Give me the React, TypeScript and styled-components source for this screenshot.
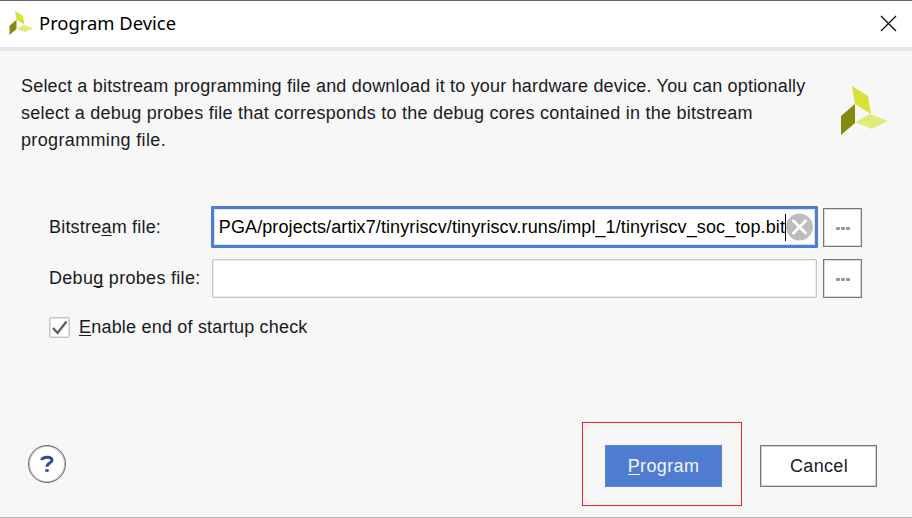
import React from "react";
import styled, { createGlobalStyle } from "styled-components";

const GlobalStyle = createGlobalStyle`
  * { box-sizing: border-box; }
  body { margin: 0; background: #f7f7f7; overflow: hidden; }
`;

const Dialog = styled.div`
  width: 912px;
  height: 518px;
  display: flex;
  flex-direction: column;
  background: #f7f7f7;
  border-top: 1px solid #666;
  border-bottom: 1px solid #b9b9b9;
  color: #1a1a1e;
  font: 18px/27px "Liberation Sans", Arial, sans-serif;
  white-space: nowrap;
`;

const TitleBar = styled.header`
  height: 50px;
  flex: none;
  display: flex;
  align-items: center;
  padding: 0 15px 2px 9px;
  background: #fff;
  border-bottom: 4px solid #e7e7e7;
`;

const Title = styled.h1`
  flex: 1;
  margin: 0 0 0 6px;
  color: #000;
  font: 400 18.4px/26px "Noto Sans", "Segoe UI", sans-serif;
`;

const CloseButton = styled.button`
  display: flex;
  padding: 0;
  border: 0;
  background: none;
`;

const Intro = styled.section`
  display: flex;
  justify-content: space-between;
  height: 118px;
  padding: 22px 24px 0 21px;
`;

const Description = styled.p`
  margin: 0;
`;

const Line = styled.span<{ $spacing: number }>`
  display: block;
  letter-spacing: ${(p) => p.$spacing}px;
`;

const BrandMark = styled.div`
  padding-top: 13px;
`;

const Form = styled.section`
  display: grid;
  grid-template-columns: 162px 607px 39px;
  grid-template-rows: 42px 42px;
  row-gap: 9px;
  align-items: center;
  margin: 37px 0 0 49px;
`;

const Label = styled.label<{ $spacing: number }>`
  letter-spacing: ${(p) => p.$spacing}px;
`;

const Mnemonic = styled.span`
  text-decoration: underline;
  text-decoration-thickness: 1px;
  text-underline-offset: 2px;
  text-decoration-skip-ink: none;
`;

const Field = styled.div<{ $focused?: boolean }>`
  display: flex;
  align-items: center;
  overflow: hidden;
  height: ${(p) => (p.$focused ? 42 : 39)}px;
  margin: ${(p) => (p.$focused ? "0" : "0 1px")};
  padding: 0 2px 0 4px;
  background: #fff;
  border: ${(p) => (p.$focused ? "3px solid #4f7dd2" : "1px solid #c4c4c4")};
  box-shadow: ${(p) => (p.$focused ? "inset 0 0 0 1px #d5e0f5" : "inset 0 0 0 1px #ececec, 0 0 0 1px #fbfbfb")};
  border-radius: 1px;
`;

const PathClip = styled.div`
  flex: 1;
  display: flex;
  justify-content: flex-end;
  overflow: hidden;
  color: #000;
  letter-spacing: 0.1px;
`;

const Caret = styled.span`
  width: 1px;
  height: 27px;
  flex: none;
  background: #000;
`;

const BrowseButton = styled.button`
  width: 39px;
  height: 39px;
  display: flex;
  align-items: center;
  justify-content: center;
  gap: 1px;
  margin-left: 5px;
  padding: 2px 0 0;
  background: #fff;
  border: 1px solid #777;
  box-shadow: inset 0 0 0 1px #d8d8d8;
`;

const Dot = styled.i`
  width: 4px;
  height: 3px;
  border-radius: 1px;
  background: #96968e;
`;

const CheckRow = styled.div`
  display: flex;
  align-items: center;
  gap: 9px;
  height: 27px;
  margin: 15px 0 0 49px;
`;

const CheckBox = styled.span`
  width: 21px;
  height: 21px;
  display: flex;
  background: #fff;
  border: 1px solid #c5c5c5;
  border-radius: 2px;
  box-shadow: inset 0 0 0 1px #e4e4e4;
`;

const Footer = styled.footer`
  display: flex;
  align-items: center;
  height: 84px;
  margin-top: auto;
  margin-bottom: 11px;
  padding: 0 35px 0 28px;
`;

const HelpButton = styled.button`
  width: 38px;
  height: 38px;
  margin-right: auto;
  padding: 0;
  background: #fff;
  border: 1px solid #666;
  box-shadow: inset 0 0 0 1px #c4c4c4;
  border-radius: 50%;
  display: flex;
  align-items: center;
  justify-content: center;
`;

const Highlight = styled.div`
  width: 160px;
  height: 84px;
  display: flex;
  align-items: center;
  justify-content: center;
  margin-right: 18px;
  padding: 4px 0 0 3px;
  border: 1px solid #ed1c24;
`;

const ActionButton = styled.button<{ $primary?: boolean }>`
  width: 117px;
  height: 42px;
  margin-top: ${(p) => (p.$primary ? 0 : 4)}px;
  padding: ${(p) => (p.$primary ? "0" : "0 0 0 1px")};
  font: inherit;
  letter-spacing: 0.35px;
  color: ${(p) => (p.$primary ? "#f1f5fc" : "#1a1a1e")};
  background: ${(p) => (p.$primary ? "#4f7cd1" : "#fff")};
  border: 1px solid ${(p) => (p.$primary ? "#5c86d5" : "#777")};
  box-shadow: ${(p) => (p.$primary ? "none" : "inset 0 0 0 1px #d0d0d0")};
`;

const Logo = ({ width, height }: { width: number; height: number }) => (
  <svg width={width} height={height} viewBox="0 0 48 49" preserveAspectRatio="none">
    <path d="M12 0 28 10 31 28 15 18Z" fill="#d7e13b" />
    <path d="M1 30 15 18V37L1 49Z" fill="#858b0c" />
    <path d="M15 36 30 28 48 35 32 43Z" fill="#e2ea7b" />
  </svg>
);

const Browse = () => (
  <BrowseButton aria-label="Browse">
    <Dot />
    <Dot />
    <Dot />
  </BrowseButton>
);

export default function App() {
  return (
    <Dialog role="dialog">
      <GlobalStyle />
      <TitleBar>
        <Logo width={24} height={24} />
        <Title>Program Device</Title>
        <CloseButton aria-label="Close">
          <svg width="17" height="17" viewBox="0 0 17 17" stroke="#000" strokeWidth="1.2">
            <path d="M1 1 16 16M16 1 1 16" />
          </svg>
        </CloseButton>
      </TitleBar>

      <Intro>
        <Description>
          <Line $spacing={0.19}>
            Select a bitstream programming file and download it to your hardware device. You can optionally
          </Line>
          <Line $spacing={0.25}>
            select a debug probes file that corresponds to the debug cores contained in the bitstream
          </Line>
          <Line $spacing={0.35}>programming file.</Line>
        </Description>
        <BrandMark>
          <Logo width={48} height={49} />
        </BrandMark>
      </Intro>

      <Form>
        <Label $spacing={0.2}>
          Bitstre<Mnemonic>a</Mnemonic>m file:
        </Label>
        <Field $focused>
          <PathClip>FPGA/projects/artix7/tinyriscv/tinyriscv.runs/impl_1/tinyriscv_soc_top.bit</PathClip>
          <Caret />
          <svg width="27" height="28" viewBox="0 0 27 28">
            <circle cx="13.5" cy="14" r="13.4" fill="#bdbdbd" />
            <path d="M6.5 7 20.5 21M20.5 7 6.5 21" stroke="#fff" strokeWidth="2.6" />
          </svg>
        </Field>
        <Browse />
        <Label $spacing={0.3}>
          Debu<Mnemonic>g</Mnemonic> probes file:
        </Label>
        <Field />
        <Browse />
      </Form>

      <CheckRow>
        <CheckBox>
          <svg width="19" height="19" viewBox="0 0 19 19">
            <path d="M3 10 7.5 15 16.5 3.5" fill="none" stroke="#606060" strokeWidth="2.4" />
          </svg>
        </CheckBox>
        <Label $spacing={0.2}>
          <Mnemonic>E</Mnemonic>nable end of startup check
        </Label>
      </CheckRow>

      <Footer>
        <HelpButton aria-label="Help">
          <svg width="16" height="18" viewBox="0 0 16 18" fill="none" stroke="#304f91">
            <path d="M2.5 5C4 1.3 13 1.2 13 5.3 13 8.2 8 8 8 11.7" strokeWidth="3" />
            <path d="M6.3 15.5H9.7" strokeWidth="2.6" />
          </svg>
        </HelpButton>
        <Highlight>
          <ActionButton $primary>
            <Mnemonic>P</Mnemonic>rogram
          </ActionButton>
        </Highlight>
        <ActionButton>Cancel</ActionButton>
      </Footer>
    </Dialog>
  );
}
